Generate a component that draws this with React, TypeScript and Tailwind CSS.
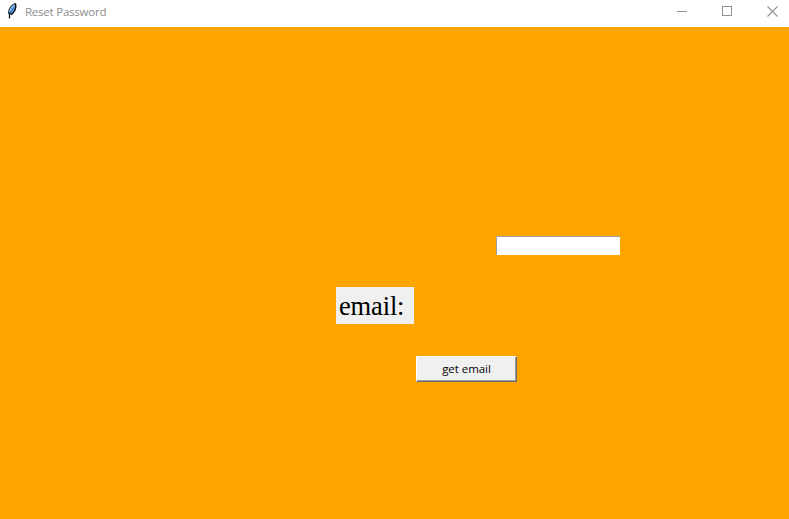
function FeatherIcon() {
  return (
    <svg width="12" height="18" viewBox="0 0 12 18" className="mt-[2px] ml-[6px] shrink-0">
      <path d="M2.4 12.4 C1.4 8.6 3.6 3.6 9.4 1 C10.8 4.8 9.6 9.4 5.2 12.8 Z" fill="#5fa5ee" />
      <path d="M2.6 12 C2 8.6 3.8 4 9 1.4" fill="none" stroke="#3a3e45" strokeWidth="1.1" />
      <path d="M8 3 C5.6 4.8 4.2 7.2 3.8 9.4" fill="none" stroke="#b4c4d4" strokeWidth="0.9" />
      <path d="M9.5 1.4 C10.4 5 9.2 9.4 5.2 12.8" fill="none" stroke="#0a0a0a" strokeWidth="1.3" />
      <path d="M7.4 6 L4.5 11" fill="none" stroke="#2c5c9c" strokeWidth="0.8" />
      <path d="M4.5 10.5 L3.5 13 L3.5 16.6" fill="none" stroke="#101418" strokeWidth="1.3" />
    </svg>
  );
}

function TitleBar() {
  return (
    <header className="flex h-[27px] shrink-0 items-start bg-white">
      <FeatherIcon />
      <span className="mt-[4px] ml-[7px] w-[200px] font-['Open_Sans','Noto_Sans',sans-serif] text-[11.5px] leading-4 tracking-[-0.23px] whitespace-nowrap text-[#8c8c8c]">
        Reset Password
      </span>
      <div className="mt-[6px] mr-[11px] ml-auto flex gap-[35px] text-[#929292]">
        <svg width="10" height="11" viewBox="0 0 10 11" shapeRendering="crispEdges">
          <path d="M0 5.5H10" stroke="currentColor" />
        </svg>
        <svg width="10" height="10" viewBox="0 0 10 10" shapeRendering="crispEdges">
          <rect x="0.5" y="0.5" width="9" height="9" fill="none" stroke="currentColor" />
        </svg>
        <svg width="11" height="11" viewBox="0 0 11 11">
          <path d="M0.5 0.5L10.5 10.5M10.5 0.5L0.5 10.5" stroke="currentColor" strokeWidth="1.1" />
        </svg>
      </div>
    </header>
  );
}

export default function App() {
  return (
    <div className="flex h-[519px] w-[789px] flex-col overflow-hidden bg-[#ffa500]">
      <TitleBar />
      <main className="flex flex-col items-start pt-[209px]">
        <input
          type="text"
          aria-label="email"
          className="ml-[496px] h-[19px] w-[124px] border-t border-l border-[#a0a0a0] bg-white px-1 text-xs outline-none"
        />
        <label className="mt-[32px] ml-[336px] h-[37px] w-[78px] bg-[#f0f0f0] pl-[3px] font-['Liberation_Serif',serif] text-[26.5px] leading-[38px] tracking-[-0.15px] whitespace-nowrap text-black">
          email:
        </label>
        <button className="mt-[32px] ml-[416px] h-[26px] w-[101px] border border-t-white border-r-[#696969] border-b-[#696969] border-l-white bg-[#f0f0f0] pb-[1px] font-['Open_Sans','Noto_Sans',sans-serif] text-[11.5px] leading-[22px] tracking-[-0.05px] text-black shadow-[inset_-1px_-1px_0_#a0a0a0]">
          get email
        </button>
      </main>
    </div>
  );
}
